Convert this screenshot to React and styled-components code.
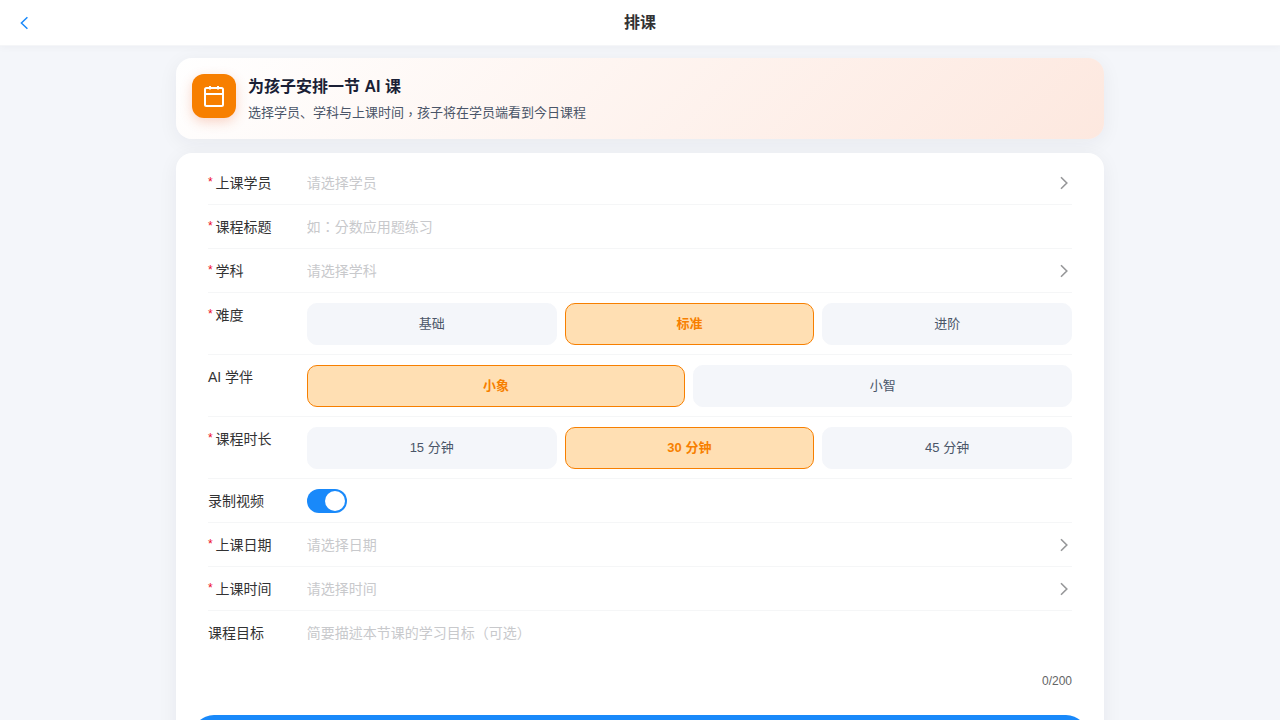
import React, { useState } from 'react';
import styled, { createGlobalStyle } from 'styled-components';

const GlobalStyle = createGlobalStyle`
    body {
        margin: 0;
        overflow: hidden;
        background: #f4f6fa;
        color: #323233;
        font-family: "Liberation Sans", "Noto Sans CJK SC", sans-serif;
    }

    * {
        box-sizing: border-box;
    }
`;

const Page = styled.div`
    height: 100vh;
    overflow: hidden;
    background: #f4f6fa;
`;

const NavBar = styled.header`
    display: grid;
    grid-template-columns: 1fr auto 1fr;
    align-items: center;
    height: 46px;
    padding: 0 16px;
    background: #fff;
    border-bottom: 1px solid #f5f6f8;
    box-shadow: 0 1px 8px rgba(26, 31, 54, 0.04);
`;

const BackButton = styled.button`
    display: flex;
    width: 16px;
    height: 16px;
    padding: 0;
    border: none;
    background: none;
    color: #1989fa;
    cursor: pointer;
`;

const NavTitle = styled.h1`
    margin: 0;
    font-size: 16px;
    font-weight: 600;
    line-height: 24px;
    color: #323233;
`;

const Content = styled.main`
    display: flex;
    flex-direction: column;
    gap: 14px;
    width: 960px;
    margin: 0 auto;
    padding: 12px 16px;
`;

const Hero = styled.section`
    display: flex;
    gap: 12px;
    height: 81px;
    padding: 16px;
    border-radius: 16px;
    background: linear-gradient(135deg, #fff 0%, #fde8df 100%);
    box-shadow: 0 4px 20px rgba(26, 31, 54, 0.06);
`;

const HeroIcon = styled.div`
    display: flex;
    align-items: center;
    justify-content: center;
    flex-shrink: 0;
    width: 44px;
    height: 44px;
    border-radius: 12px;
    background: #f77f00;
    color: #fff;
    box-shadow: 0 4px 12px rgba(232, 93, 44, 0.25);
`;

const HeroTitle = styled.h2`
    margin: 0;
    padding-top: 1px;
    font-size: 16px;
    font-weight: 700;
    line-height: 24px;
    color: #1a1f36;
`;

const HeroText = styled.p`
    margin: 3px 0 0;
    font-size: 13px;
    line-height: 21px;
    color: #4a5568;
`;

const Comma = styled.span`
    font-family: "Noto Sans CJK TC", sans-serif;
    line-height: 1;
    vertical-align: -2px;
`;

const Card = styled.section`
    padding: 8px 16px 16px;
    border-radius: 16px;
    background: #fff;
    box-shadow: 0 4px 20px rgba(26, 31, 54, 0.06);
`;

const Cell = styled.div`
    display: flex;
    margin: 0 16px;
    padding: 10px 0 ${(props) => (props.$last ? '10px' : '9px')};
    border-bottom: ${(props) => (props.$last ? 'none' : '1px solid #f5f6f7')};
    font-size: 14px;
    line-height: 24px;
`;

const Label = styled.label`
    flex: none;
    width: 86.8px;
    margin-right: 12px;
    color: #323233;
`;

const Star = styled.span`
    display: inline-block;
    width: 5.5px;
    height: 24px;
    margin-right: 2px;
    vertical-align: top;
    font-size: 12px;
    line-height: 22px;
    color: #ee0a24;
`;

const Value = styled.div`
    flex: 1;
    min-width: 0;
`;

const Input = styled.input`
    display: block;
    width: 100%;
    height: 24px;
    padding: 0;
    border: none;
    outline: none;
    background: transparent;
    color: #323233;
    font-family: "Liberation Sans", "Noto Sans CJK TC", sans-serif;
    font-size: 14px;
    line-height: 24px;

    &::placeholder {
        color: #c8c9cc;
    }
`;

const TextArea = styled.textarea`
    display: block;
    width: 100%;
    height: 48px;
    padding: 0;
    border: none;
    outline: none;
    resize: none;
    color: #323233;
    font-family: "Liberation Sans", "Noto Sans CJK TC", sans-serif;
    font-size: 14px;
    line-height: 24px;

    &::placeholder {
        color: #c8c9cc;
    }
`;

const WordLimit = styled.div`
    margin-top: 4px;
    font-size: 12px;
    line-height: 16px;
    text-align: right;
    color: #646566;
`;

const Arrow = styled.div`
    display: flex;
    align-items: center;
    height: 24px;
    margin-left: 4px;
    color: #969799;
`;

const Options = styled.div`
    display: grid;
    grid-template-columns: repeat(${(props) => props.$count}, 1fr);
    gap: 8px;
`;

const Option = styled.button`
    height: 42px;
    padding: 0 8px 4px;
    border: 1px solid ${(props) => (props.$active ? '#f77f00' : '#f4f6fa')};
    border-radius: 10px;
    background: ${(props) => (props.$active ? '#ffdfb3' : '#f4f6fa')};
    color: ${(props) => (props.$active ? '#f77f00' : '#4a5568')};
    font-family: inherit;
    font-size: 13px;
    font-weight: ${(props) => (props.$active ? 600 : 400)};
    cursor: pointer;
`;

const Switch = styled.button`
    display: flex;
    justify-content: ${(props) => (props.$on ? 'flex-end' : 'flex-start')};
    width: 40px;
    height: 24px;
    padding: 2px;
    border: none;
    border-radius: 12px;
    background: ${(props) => (props.$on ? '#1989fa' : '#dcdee0')};
    cursor: pointer;
`;

const Knob = styled.span`
    width: 20px;
    height: 20px;
    border-radius: 50%;
    background: #fff;
`;

const SubmitButton = styled.button`
    display: block;
    width: 100%;
    height: 44px;
    margin-top: 16px;
    border: none;
    border-radius: 22px;
    background: #1989fa;
    color: #fff;
    font-family: inherit;
    font-size: 16px;
`;

const ChevronLeft = () => (
  <svg width="16" height="16" viewBox="0 0 16 16" fill="none" stroke="currentColor" strokeWidth="1.5">
    <path d="M11.4 2.2 5.4 8l6 5.8" />
  </svg>
);

const ChevronRight = () => (
  <svg width="16" height="16" viewBox="0 0 16 16" fill="none" stroke="currentColor" strokeWidth="1.6">
    <path d="M5 2.2 10.8 8 5 13.8" />
  </svg>
);

const CalendarIcon = () => (
  <svg width="24" height="24" viewBox="0 0 24 24" fill="none" stroke="currentColor" strokeWidth="2">
    <rect x="3" y="4" width="18" height="18" rx="1.5" />
    <path d="M3 10h18M8 2v3.6M16 2v3.6" />
  </svg>
);

const Field = ({ label, required, last, arrow, children }) => (
  <Cell $last={last}>
    <Label>
      {required && <Star>*</Star>}
      {label}
    </Label>
    <Value>{children}</Value>
    {arrow && (
      <Arrow>
        <ChevronRight />
      </Arrow>
    )}
  </Cell>
);

const OptionGroup = ({ options, value, onChange }) => (
  <Options $count={options.length}>
    {options.map((option) => (
      <Option key={option} $active={option === value} onClick={() => onChange(option)}>
        {option}
      </Option>
    ))}
  </Options>
);

const App = () => {
  const [level, setLevel] = useState('标准');
  const [partner, setPartner] = useState('小象');
  const [duration, setDuration] = useState('30 分钟');
  const [record, setRecord] = useState(true);
  const [title, setTitle] = useState('');
  const [goal, setGoal] = useState('');

  return (
    <Page>
      <GlobalStyle />
      <NavBar>
        <BackButton>
          <ChevronLeft />
        </BackButton>
        <NavTitle>排课</NavTitle>
      </NavBar>
      <Content>
        <Hero>
          <HeroIcon>
            <CalendarIcon />
          </HeroIcon>
          <div>
            <HeroTitle>为孩子安排一节 AI 课</HeroTitle>
            <HeroText>
              选择学员、学科与上课时间<Comma>，</Comma>孩子将在学员端看到今日课程
            </HeroText>
          </div>
        </Hero>
        <Card>
          <Field label="上课学员" required arrow>
            <Input placeholder="请选择学员" readOnly />
          </Field>
          <Field label="课程标题" required>
            <Input
              placeholder="如：分数应用题练习"
              value={title}
              onChange={(event) => setTitle(event.target.value)}
            />
          </Field>
          <Field label="学科" required arrow>
            <Input placeholder="请选择学科" readOnly />
          </Field>
          <Field label="难度" required>
            <OptionGroup options={['基础', '标准', '进阶']} value={level} onChange={setLevel} />
          </Field>
          <Field label="AI 学伴">
            <OptionGroup options={['小象', '小智']} value={partner} onChange={setPartner} />
          </Field>
          <Field label="课程时长" required>
            <OptionGroup
              options={['15 分钟', '30 分钟', '45 分钟']}
              value={duration}
              onChange={setDuration}
            />
          </Field>
          <Field label="录制视频">
            <Switch $on={record} onClick={() => setRecord(!record)}>
              <Knob />
            </Switch>
          </Field>
          <Field label="上课日期" required arrow>
            <Input placeholder="请选择日期" readOnly />
          </Field>
          <Field label="上课时间" required arrow>
            <Input placeholder="请选择时间" readOnly />
          </Field>
          <Field label="课程目标" last>
            <TextArea
              placeholder="简要描述本节课的学习目标（可选）"
              maxLength={200}
              value={goal}
              onChange={(event) => setGoal(event.target.value)}
            />
            <WordLimit>{goal.length}/200</WordLimit>
          </Field>
          <SubmitButton />
        </Card>
      </Content>
    </Page>
  );
};

export default App;
